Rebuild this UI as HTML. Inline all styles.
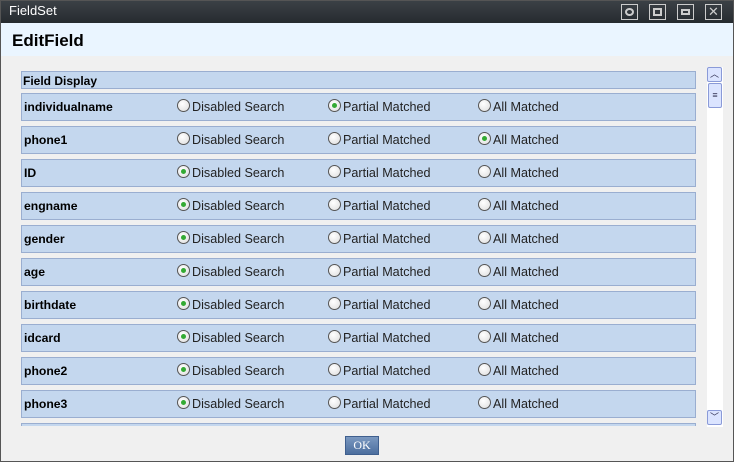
<!DOCTYPE html>
<html><head><style>
*{margin:0;padding:0;box-sizing:border-box}
body{width:734px;height:462px;overflow:hidden;background:#f0f0f0;font-family:"Liberation Sans",Arial,sans-serif;position:relative}
.frame{position:absolute;left:0;top:0;width:734px;height:462px;border:1px solid #555;pointer-events:none}
.tb{position:absolute;left:0;top:0;width:734px;height:23px;background:linear-gradient(#3c4247,#262b2f);color:#fff;font-size:13px;padding:3px 0 0 9px}
.ic{position:absolute;top:4px;width:17px;height:16px;border:1px solid #ccc}
.hd{position:absolute;left:0;top:23px;width:734px;height:33px;background:#eaf5ff;font-weight:bold;font-size:17px;padding:8px 0 0 12px;color:#000}
.clip{position:absolute;left:21px;top:70px;width:676px;height:356px;overflow:hidden}
.fh{position:absolute;left:0;top:1px;width:675px;height:18px;background:#c4d7ee;border:1px solid #9aaed0;font-size:12px;font-weight:bold;padding:2px 0 0 1px}
.row{position:absolute;left:0;width:675px;height:28px;background:#c4d7ee;border:1px solid #9aaed0;font-size:12.6px}
.lb{position:absolute;left:2px;top:6px;font-weight:bold;font-size:12.2px}
.r{position:absolute;top:6px;color:#222}
.r i{position:absolute;left:-15px;top:-1px;width:13px;height:13px;border-radius:50%;border:1px solid #555;background:radial-gradient(circle at 40% 35%,#fff,#ddd)}
.r i.on:after{content:"";position:absolute;left:3px;top:3px;width:5px;height:5px;border-radius:50%;background:#3a3}
.sb{position:absolute;left:707px;top:67px;width:16px;height:360px;background:#fff}
.btn{position:absolute;width:15px;height:15px;border:1px solid #8a9ad8;background:#dbe4ff;border-radius:2px;font-size:9px;color:#335;text-align:center;line-height:13px}
.ok{position:absolute;left:345px;top:436px;width:34px;height:19px;background:linear-gradient(#7a98c0,#4c6e9e);border:1px solid #3f5f8e;color:#fff;font-family:"Liberation Serif",serif;font-size:12px;text-align:center;line-height:17px}
</style></head><body>
<div class="tb">FieldSet</div>
<div class="ic" style="left:621px"><div style="margin:3px;width:9px;height:8px;border:2px solid #ccc;border-radius:50%"></div></div>
<div class="ic" style="left:649px"><div style="margin:3px;width:9px;height:8px;border:2px solid #ccc"></div></div>
<div class="ic" style="left:677px"><div style="margin:4px 3px;width:9px;height:6px;border:2px solid #ccc"></div></div>
<div class="ic" style="left:705px;color:#ccc;font-size:13px;text-align:center;line-height:14px">✕</div>
<div class="hd">EditField</div>
<div class="clip">
<div class="fh">Field Display</div>
<div class="row" style="top:23px"><span class="lb">individualname</span><span class="r" style="left:170px"><i></i>Disabled Search</span><span class="r" style="left:321px"><i class="on"></i>Partial Matched</span><span class="r" style="left:471px"><i></i>All Matched</span></div>
<div class="row" style="top:56px"><span class="lb">phone1</span><span class="r" style="left:170px"><i></i>Disabled Search</span><span class="r" style="left:321px"><i></i>Partial Matched</span><span class="r" style="left:471px"><i class="on"></i>All Matched</span></div>
<div class="row" style="top:89px"><span class="lb">ID</span><span class="r" style="left:170px"><i class="on"></i>Disabled Search</span><span class="r" style="left:321px"><i></i>Partial Matched</span><span class="r" style="left:471px"><i></i>All Matched</span></div>
<div class="row" style="top:122px"><span class="lb">engname</span><span class="r" style="left:170px"><i class="on"></i>Disabled Search</span><span class="r" style="left:321px"><i></i>Partial Matched</span><span class="r" style="left:471px"><i></i>All Matched</span></div>
<div class="row" style="top:155px"><span class="lb">gender</span><span class="r" style="left:170px"><i class="on"></i>Disabled Search</span><span class="r" style="left:321px"><i></i>Partial Matched</span><span class="r" style="left:471px"><i></i>All Matched</span></div>
<div class="row" style="top:188px"><span class="lb">age</span><span class="r" style="left:170px"><i class="on"></i>Disabled Search</span><span class="r" style="left:321px"><i></i>Partial Matched</span><span class="r" style="left:471px"><i></i>All Matched</span></div>
<div class="row" style="top:221px"><span class="lb">birthdate</span><span class="r" style="left:170px"><i class="on"></i>Disabled Search</span><span class="r" style="left:321px"><i></i>Partial Matched</span><span class="r" style="left:471px"><i></i>All Matched</span></div>
<div class="row" style="top:254px"><span class="lb">idcard</span><span class="r" style="left:170px"><i class="on"></i>Disabled Search</span><span class="r" style="left:321px"><i></i>Partial Matched</span><span class="r" style="left:471px"><i></i>All Matched</span></div>
<div class="row" style="top:287px"><span class="lb">phone2</span><span class="r" style="left:170px"><i class="on"></i>Disabled Search</span><span class="r" style="left:321px"><i></i>Partial Matched</span><span class="r" style="left:471px"><i></i>All Matched</span></div>
<div class="row" style="top:320px"><span class="lb">phone3</span><span class="r" style="left:170px"><i class="on"></i>Disabled Search</span><span class="r" style="left:321px"><i></i>Partial Matched</span><span class="r" style="left:471px"><i></i>All Matched</span></div>
<div class="row" style="top:353px"></div>
</div>
<div class="sb">
<div class="btn" style="left:0;top:0">︿</div>
<div class="btn" style="left:1px;top:16px;height:25px;width:14px;line-height:22px">≡</div>
<div class="btn" style="left:0;top:343px">﹀</div>
</div>
<div class="ok">OK</div>
<div class="frame"></div>
</body></html>
